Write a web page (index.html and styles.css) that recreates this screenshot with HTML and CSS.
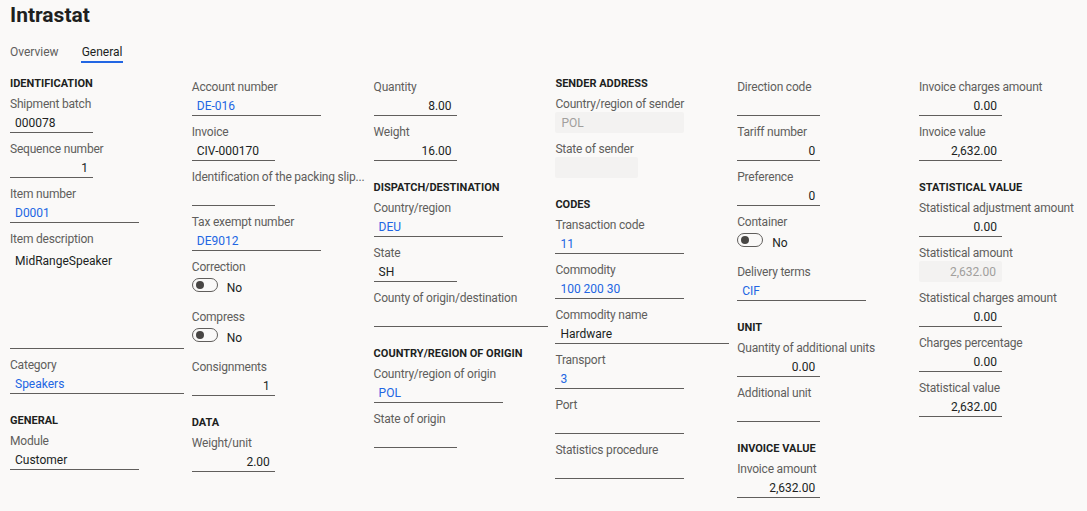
FILE: index.html
```html
<!DOCTYPE html>
<html lang="en">
<head>
  <meta charset="UTF-8">
  <title>Intrastat</title>
  <link rel="stylesheet" href="styles.css">
</head>
<body>
  <h1 class="page-title">Intrastat</h1>
  <nav class="tabs">
    <span class="tab">Overview</span>
    <span class="tab active">General</span>
  </nav>

  <div class="form">
    <!-- column 1 -->
    <div class="col">
      <h2 class="group-title">Identification</h2>
      <div class="field"><div class="label">Shipment batch</div><div class="input s">000078</div></div>
      <div class="field"><div class="label">Sequence number</div><div class="input s num">1</div></div>
      <div class="field"><div class="label">Item number</div><div class="input m link">D0001</div></div>
      <div class="field"><div class="label">Item description</div><div class="input l area">MidRangeSpeaker</div></div>
      <div class="field"><div class="label">Category</div><div class="input l link">Speakers</div></div>
      <h2 class="group-title">General</h2>
      <div class="field"><div class="label">Module</div><div class="input m">Customer</div></div>
    </div>

    <!-- column 2 -->
    <div class="col">
      <div class="field"><div class="label">Account number</div><div class="input m link">DE-016</div></div>
      <div class="field"><div class="label">Invoice</div><div class="input s">CIV-000170</div></div>
      <div class="field"><div class="label">Identification of the packing slip...</div><div class="input s"></div></div>
      <div class="field"><div class="label">Tax exempt number</div><div class="input m link">DE9012</div></div>
      <div class="field"><div class="label">Correction</div><div class="toggle-row"><span class="toggle"></span><span>No</span></div></div>
      <div class="field"><div class="label">Compress</div><div class="toggle-row"><span class="toggle"></span><span>No</span></div></div>
      <div class="field"><div class="label">Consignments</div><div class="input s num">1</div></div>
      <h2 class="group-title">Data</h2>
      <div class="field"><div class="label">Weight/unit</div><div class="input s num">2.00</div></div>
    </div>

    <!-- column 3 -->
    <div class="col">
      <div class="field"><div class="label">Quantity</div><div class="input s num">8.00</div></div>
      <div class="field"><div class="label">Weight</div><div class="input s num">16.00</div></div>
      <h2 class="group-title">Dispatch/destination</h2>
      <div class="field"><div class="label">Country/region</div><div class="input m link">DEU</div></div>
      <div class="field"><div class="label">State</div><div class="input s">SH</div></div>
      <div class="field"><div class="label">County of origin/destination</div><div class="input l"></div></div>
      <h2 class="group-title">Country/region of origin</h2>
      <div class="field"><div class="label">Country/region of origin</div><div class="input m link">POL</div></div>
      <div class="field"><div class="label">State of origin</div><div class="input s"></div></div>
    </div>

    <!-- column 4 -->
    <div class="col">
      <h2 class="group-title">Sender address</h2>
      <div class="field"><div class="label">Country/region of sender</div><div class="input m disabled">POL</div></div>
      <div class="field"><div class="label">State of sender</div><div class="input s disabled"></div></div>
      <h2 class="group-title">Codes</h2>
      <div class="field"><div class="label">Transaction code</div><div class="input m link">11</div></div>
      <div class="field"><div class="label">Commodity</div><div class="input m link">100 200 30</div></div>
      <div class="field"><div class="label">Commodity name</div><div class="input l">Hardware</div></div>
      <div class="field"><div class="label">Transport</div><div class="input m link">3</div></div>
      <div class="field"><div class="label">Port</div><div class="input m"></div></div>
      <div class="field"><div class="label">Statistics procedure</div><div class="input m"></div></div>
    </div>

    <!-- column 5 -->
    <div class="col">
      <div class="field"><div class="label">Direction code</div><div class="input s"></div></div>
      <div class="field"><div class="label">Tariff number</div><div class="input s num">0</div></div>
      <div class="field"><div class="label">Preference</div><div class="input s num">0</div></div>
      <div class="field"><div class="label">Container</div><div class="toggle-row"><span class="toggle"></span><span>No</span></div></div>
      <div class="field"><div class="label">Delivery terms</div><div class="input m link">CIF</div></div>
      <h2 class="group-title">Unit</h2>
      <div class="field"><div class="label">Quantity of additional units</div><div class="input s num">0.00</div></div>
      <div class="field"><div class="label">Additional unit</div><div class="input s"></div></div>
      <h2 class="group-title">Invoice value</h2>
      <div class="field"><div class="label">Invoice amount</div><div class="input s num">2,632.00</div></div>
    </div>

    <!-- column 6 -->
    <div class="col">
      <div class="field"><div class="label">Invoice charges amount</div><div class="input s num">0.00</div></div>
      <div class="field"><div class="label">Invoice value</div><div class="input s num">2,632.00</div></div>
      <h2 class="group-title">Statistical value</h2>
      <div class="field"><div class="label">Statistical adjustment amount</div><div class="input s num">0.00</div></div>
      <div class="field"><div class="label">Statistical amount</div><div class="input s num disabled">2,632.00</div></div>
      <div class="field"><div class="label">Statistical charges amount</div><div class="input s num">0.00</div></div>
      <div class="field"><div class="label">Charges percentage</div><div class="input s num">0.00</div></div>
      <div class="field"><div class="label">Statistical value</div><div class="input s num">2,632.00</div></div>
    </div>
  </div>
</body>
</html>
```

FILE: styles.css
```css
:root {
  --bg: #faf9f8;
  --text: #201f1e;
  --label: #605e5c;
  --line: #605e5c;
  --link: #2266e3;
  --disabled-bg: #f3f2f1;
  --disabled-text: #a19f9d;
}
*, *::before, *::after { box-sizing: border-box; }
body {
  margin: 0;
  background: var(--bg);
  font-family: Roboto, sans-serif;
  font-size: 12px;
  color: var(--text);
}
.page-title {
  margin: 0;
  padding: 0 10px;
  height: 30px;
  line-height: 30px;
  font-size: 21px;
  font-weight: 700;
}
.tabs {
  display: flex;
  gap: 21px;
  padding: 13px 9px 0;
}
.tab {
  padding: 0 1px;
  line-height: 18px;
  color: var(--label);
  border-bottom: 2px solid transparent;
}
.tab.active {
  color: var(--text);
  border-color: var(--link);
}
.form {
  display: grid;
  grid-template-columns: repeat(6, 181.8px);
  padding: 10px 0 0 10px;
}
.col > .field:first-child { margin-top: 3px; }
.group-title {
  margin: 16px 0 0;
  font-size: 11px;
  font-weight: 700;
  line-height: 21px;
  height: 20px;
  text-transform: uppercase;
}
.col > .group-title:first-child { margin-top: 0; }
.field { margin-bottom: 5px; }
.label {
  height: 20px;
  padding-top: 1px;
  line-height: 20px;
  letter-spacing: -0.2px;
  color: var(--label);
  white-space: nowrap;
}
.input {
  height: 20px;
  padding: 1px 5px 0;
  line-height: 19px;
  border-bottom: 1px solid var(--line);
  white-space: nowrap;
}
.input.s { width: 83px; }
.input.m { width: 129px; }
.input.l { width: 174px; }
.input.num { text-align: right; }
.input.link { color: var(--link); }
.input.area { height: 101px; padding-top: 4px; }
.input.disabled {
  height: 21px;
  margin-top: -1px;
  line-height: 22px;
  padding: 0 6px;
  border: none;
  border-radius: 2px;
  background: var(--disabled-bg);
  color: var(--disabled-text);
}
.toggle-row {
  display: flex;
  align-items: flex-start;
  gap: 9px;
  height: 25px;
  padding-top: 2px;
  line-height: 21px;
  color: var(--text);
}
.toggle {
  position: relative;
  width: 26px;
  height: 14px;
  border: 1px solid var(--line);
  border-radius: 7px;
}
.toggle::after {
  content: "";
  position: absolute;
  top: 2px;
  left: 3px;
  width: 8px;
  height: 8px;
  border-radius: 50%;
  background: #484644;
}
```
